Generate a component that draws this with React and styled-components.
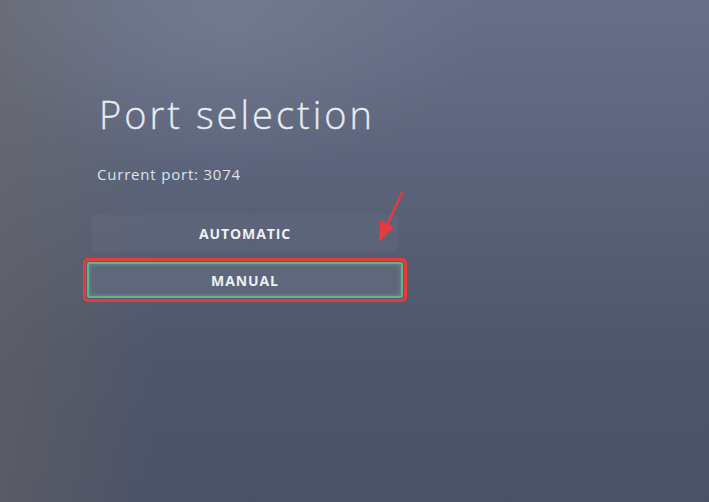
import React from 'react';
import styled, { createGlobalStyle } from 'styled-components';

const GlobalStyle = createGlobalStyle`
  body {
    margin: 0;
    background: #4c5366;
  }
`;

const Screen = styled.div`
  position: relative;
  width: 709px;
  height: 502px;
  overflow: hidden;
  box-sizing: border-box;
  padding: 90px 0 0 83px;
  font-family: 'Open Sans', 'Noto Sans', sans-serif;
  background:
    radial-gradient(ellipse 360px 220px at 230px 20px, rgba(130, 135, 155, 0.4), transparent 70%),
    linear-gradient(90deg, rgba(110, 105, 95, 0.4) 0%, rgba(110, 105, 95, 0) 22%),
    linear-gradient(180deg, #677088 0%, #5b637a 35%, #4f566b 70%, #4b5268 100%);
`;

const Panel = styled.div`
  width: 324px;
  display: flex;
  flex-direction: column;
`;

const Title = styled.h1`
  margin: 0 0 0 16px;
  font-size: 38px;
  font-weight: 300;
  line-height: 48px;
  letter-spacing: 3px;
  white-space: nowrap;
  color: #e8ebf1;
  -webkit-text-stroke: 0.3px #e8ebf1;
`;

const Subtitle = styled.p`
  margin: 27px 0 0 14px;
  font-size: 15px;
  line-height: 18px;
  letter-spacing: 0.8px;
  color: #dfe2e9;
`;

const OptionList = styled.div`
  margin-top: 32px;
  display: flex;
  flex-direction: column;
  align-items: center;
  gap: 6px;
`;

const Option = styled.div`
  box-sizing: border-box;
  width: ${(p) => (p.$selected ? '316px' : '306px')};
  height: ${(p) => (p.$selected ? '36px' : '37px')};
  display: flex;
  align-items: center;
  justify-content: center;
  font-size: 14px;
  font-weight: 700;
  letter-spacing: 0.9px;
  color: #eef0f5;
  border-radius: 2px;
  background: ${(p) => (p.$selected ? '#5f677a' : 'rgba(255, 255, 255, 0.03)')};
  border: ${(p) => (p.$selected ? '2px solid #63b38b' : 'none')};
  box-shadow: ${(p) =>
    p.$selected ? 'inset 0 0 4px rgba(110, 200, 150, 0.55)' : 'none'};
`;

const Highlight = styled.div`
  border: 3px solid #e8393d;
  border-radius: 5px;
  padding: 1px;
  display: flex;
`;

const Arrow = styled.svg`
  position: absolute;
  left: 374px;
  top: 189px;
`;

export default function App() {
  return (
    <>
      <GlobalStyle />
      <Screen>
        <Panel>
          <Title>Port selection</Title>
          <Subtitle>Current port: 3074</Subtitle>
          <OptionList>
            <Option>AUTOMATIC</Option>
            <Highlight>
              <Option $selected>MANUAL</Option>
            </Highlight>
          </OptionList>
        </Panel>
        <Arrow width="34" height="58" viewBox="0 0 34 58">
          <line x1="28" y1="4" x2="12" y2="38" stroke="#e8393d" strokeWidth="2.5" strokeLinecap="round" />
          <polygon points="5,53 6,31 20,38" fill="#e8393d" />
        </Arrow>
      </Screen>
    </>
  );
}
